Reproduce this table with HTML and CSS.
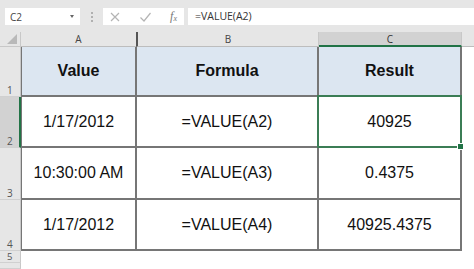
FILE: index.html
```html
<!DOCTYPE html>
<html>
<head>
<meta charset="utf-8">
<link rel="stylesheet" href="styles.css">
</head>
<body>
<div class="app">
  <div class="toolbar">
    <div class="namebox"><span>C2</span><span class="caret"></span></div>
    <div class="grip"><i></i><i></i><i></i></div>
    <div class="fxbox">
      <svg class="ico" width="12" height="12" viewBox="0 0 12 12"><path d="M2 2 L10 10 M10 2 L2 10" stroke="#b4b4b4" stroke-width="1.2" fill="none"/></svg>
      <svg class="ico" width="13" height="12" viewBox="0 0 13 12"><path d="M1.5 6.5 L5 10 L11.5 2" stroke="#b4b4b4" stroke-width="1.2" fill="none"/></svg>
      <span class="fx">f<sub>x</sub></span>
    </div>
    <div class="formula">=VALUE(A2)</div>
  </div>
  <div class="sheet">
    <div class="corner"><span class="tri"></span></div>
    <div class="colhead">A</div>
    <div class="colhead b">B</div>
    <div class="colhead sel">C</div>
    <div class="colhead rest"></div>

    <div class="rowhead">1</div>
    <div class="cell th first">Value</div>
    <div class="cell th">Formula</div>
    <div class="cell th">Result</div>
    <div class="blank"></div>

    <div class="rowhead sel">2</div>
    <div class="cell first">1/17/2012</div>
    <div class="cell">=VALUE(A2)</div>
    <div class="cell active">40925</div>
    <div class="blank"></div>

    <div class="rowhead">3</div>
    <div class="cell first">10:30:00 AM</div>
    <div class="cell">=VALUE(A3)</div>
    <div class="cell">0.4375</div>
    <div class="blank"></div>

    <div class="rowhead">4</div>
    <div class="cell first">1/17/2012</div>
    <div class="cell">=VALUE(A4)</div>
    <div class="cell">40925.4375</div>
    <div class="blank"></div>

    <div class="rowhead short">5</div>
    <div class="blank"></div>
    <div class="blank"></div>
    <div class="blank"></div>
    <div class="blank"></div>

    <div class="rowhead"></div>
    <div class="blank"></div>
    <div class="blank"></div>
    <div class="blank"></div>
    <div class="blank"></div>
  </div>
</div>
</body>
</html>
```

FILE: styles.css
```css
* { box-sizing: border-box; }
html, body { margin: 0; padding: 0; }
body { width: 474px; height: 269px; overflow: hidden; background: #fff; font-family: "Liberation Sans", Arial, sans-serif; }
.app { display: flex; flex-direction: column; height: 269px; }

.toolbar {
  height: 32px;
  background: #e6e6e6;
  display: flex;
  align-items: flex-start;
  padding: 8px 0 0 5px;
}
.namebox {
  width: 75px; height: 17px;
  background: #fff;
  display: flex; align-items: center; justify-content: space-between;
  padding: 0 6px 0 5px;
  font-family: "Open Sans", "Noto Sans", sans-serif;
  font-size: 10px; color: #444;
}
.caret { width: 0; height: 0; border-left: 2.5px solid transparent; border-right: 2.5px solid transparent; border-top: 3px solid #666; }
.grip { width: 23px; height: 17px; display: flex; flex-direction: column; align-items: center; justify-content: center; gap: 2px; }
.grip i { display: block; width: 2px; height: 2px; background: #b0b0b0; }
.fxbox {
  width: 81px; height: 17px; background: #fff;
  display: flex; align-items: center; justify-content: space-between;
  padding: 0 7px 0 6px;
}
.fx { font-family: "Liberation Serif", serif; font-style: italic; font-size: 12px; color: #777; line-height: 1; }
.fx sub { font-size: 8px; vertical-align: -1px; }
.formula {
  flex: 1; height: 17px; margin-left: 4px; background: #fff;
  font-family: "Open Sans", "Noto Sans", sans-serif; font-size: 10.5px; color: #333;
  padding-left: 7px; line-height: 17px;
}

.sheet {
  flex: 1;
  display: grid;
  grid-template-columns: 21px 116px 182px 143px 1fr;
  grid-template-rows: 15px 50px 51px 52px 51px 12px 1fr;
}
.corner { background: #e6e6e6; border-right: 1px solid #c8c8c8; border-bottom: 1px solid #c8c8c8; position: relative; }
.tri { position: absolute; right: 3px; bottom: 2px; width: 0; height: 0; border-left: 10px solid transparent; border-bottom: 10px solid #b9b9b9; }
.colhead {
  background: #e6e6e6; border-right: 1px solid #c8c8c8; border-bottom: 1px solid #bdbdbd;
  display: flex; align-items: center; justify-content: center;
  font-family: "Open Sans", "Noto Sans", sans-serif; font-size: 10px; color: #444;
}
.colhead.b { border-left: 2px solid #555; margin-left: -1px; }
.colhead.sel { background: #d2d2d2; border-bottom: 2px solid #217346; color: #333; }
.colhead.rest { border-right: none; }
.rowhead {
  background: #e6e6e6; border-right: 1px solid #c8c8c8; border-bottom: 1px solid #d0d0d0;
  display: flex; align-items: flex-end; padding: 0 0 0 7px;
  font-family: "Open Sans", "Noto Sans", sans-serif; font-size: 10px; color: #555; line-height: 12px;
  overflow: hidden;
}
.rowhead.short { line-height: 11px; font-size: 9.5px; }
.rowhead.sel { background: #d2d2d2; border-right: 2px solid #217346; }

.cell {
  display: flex; align-items: center; justify-content: center;
  font-size: 16px; color: #111;
  border-right: 2px solid #767676; border-bottom: 2px solid #767676;
}
.cell.first { border-left: 1px solid #767676; }
.cell.th { background: #dce6f1; font-weight: bold; }
.cell.active { position: relative; }
.cell.active::after {
  content: ""; position: absolute; left: -2px; top: -2px; right: -2px; bottom: -2px;
  border: 2px solid #3b7d55;
}
.cell.active::before {
  content: ""; position: absolute; right: -4px; bottom: -4px; width: 5px; height: 5px;
  background: #217346; border: 1px solid #fff; z-index: 2;
}
.blank { background: #fff; }
```
